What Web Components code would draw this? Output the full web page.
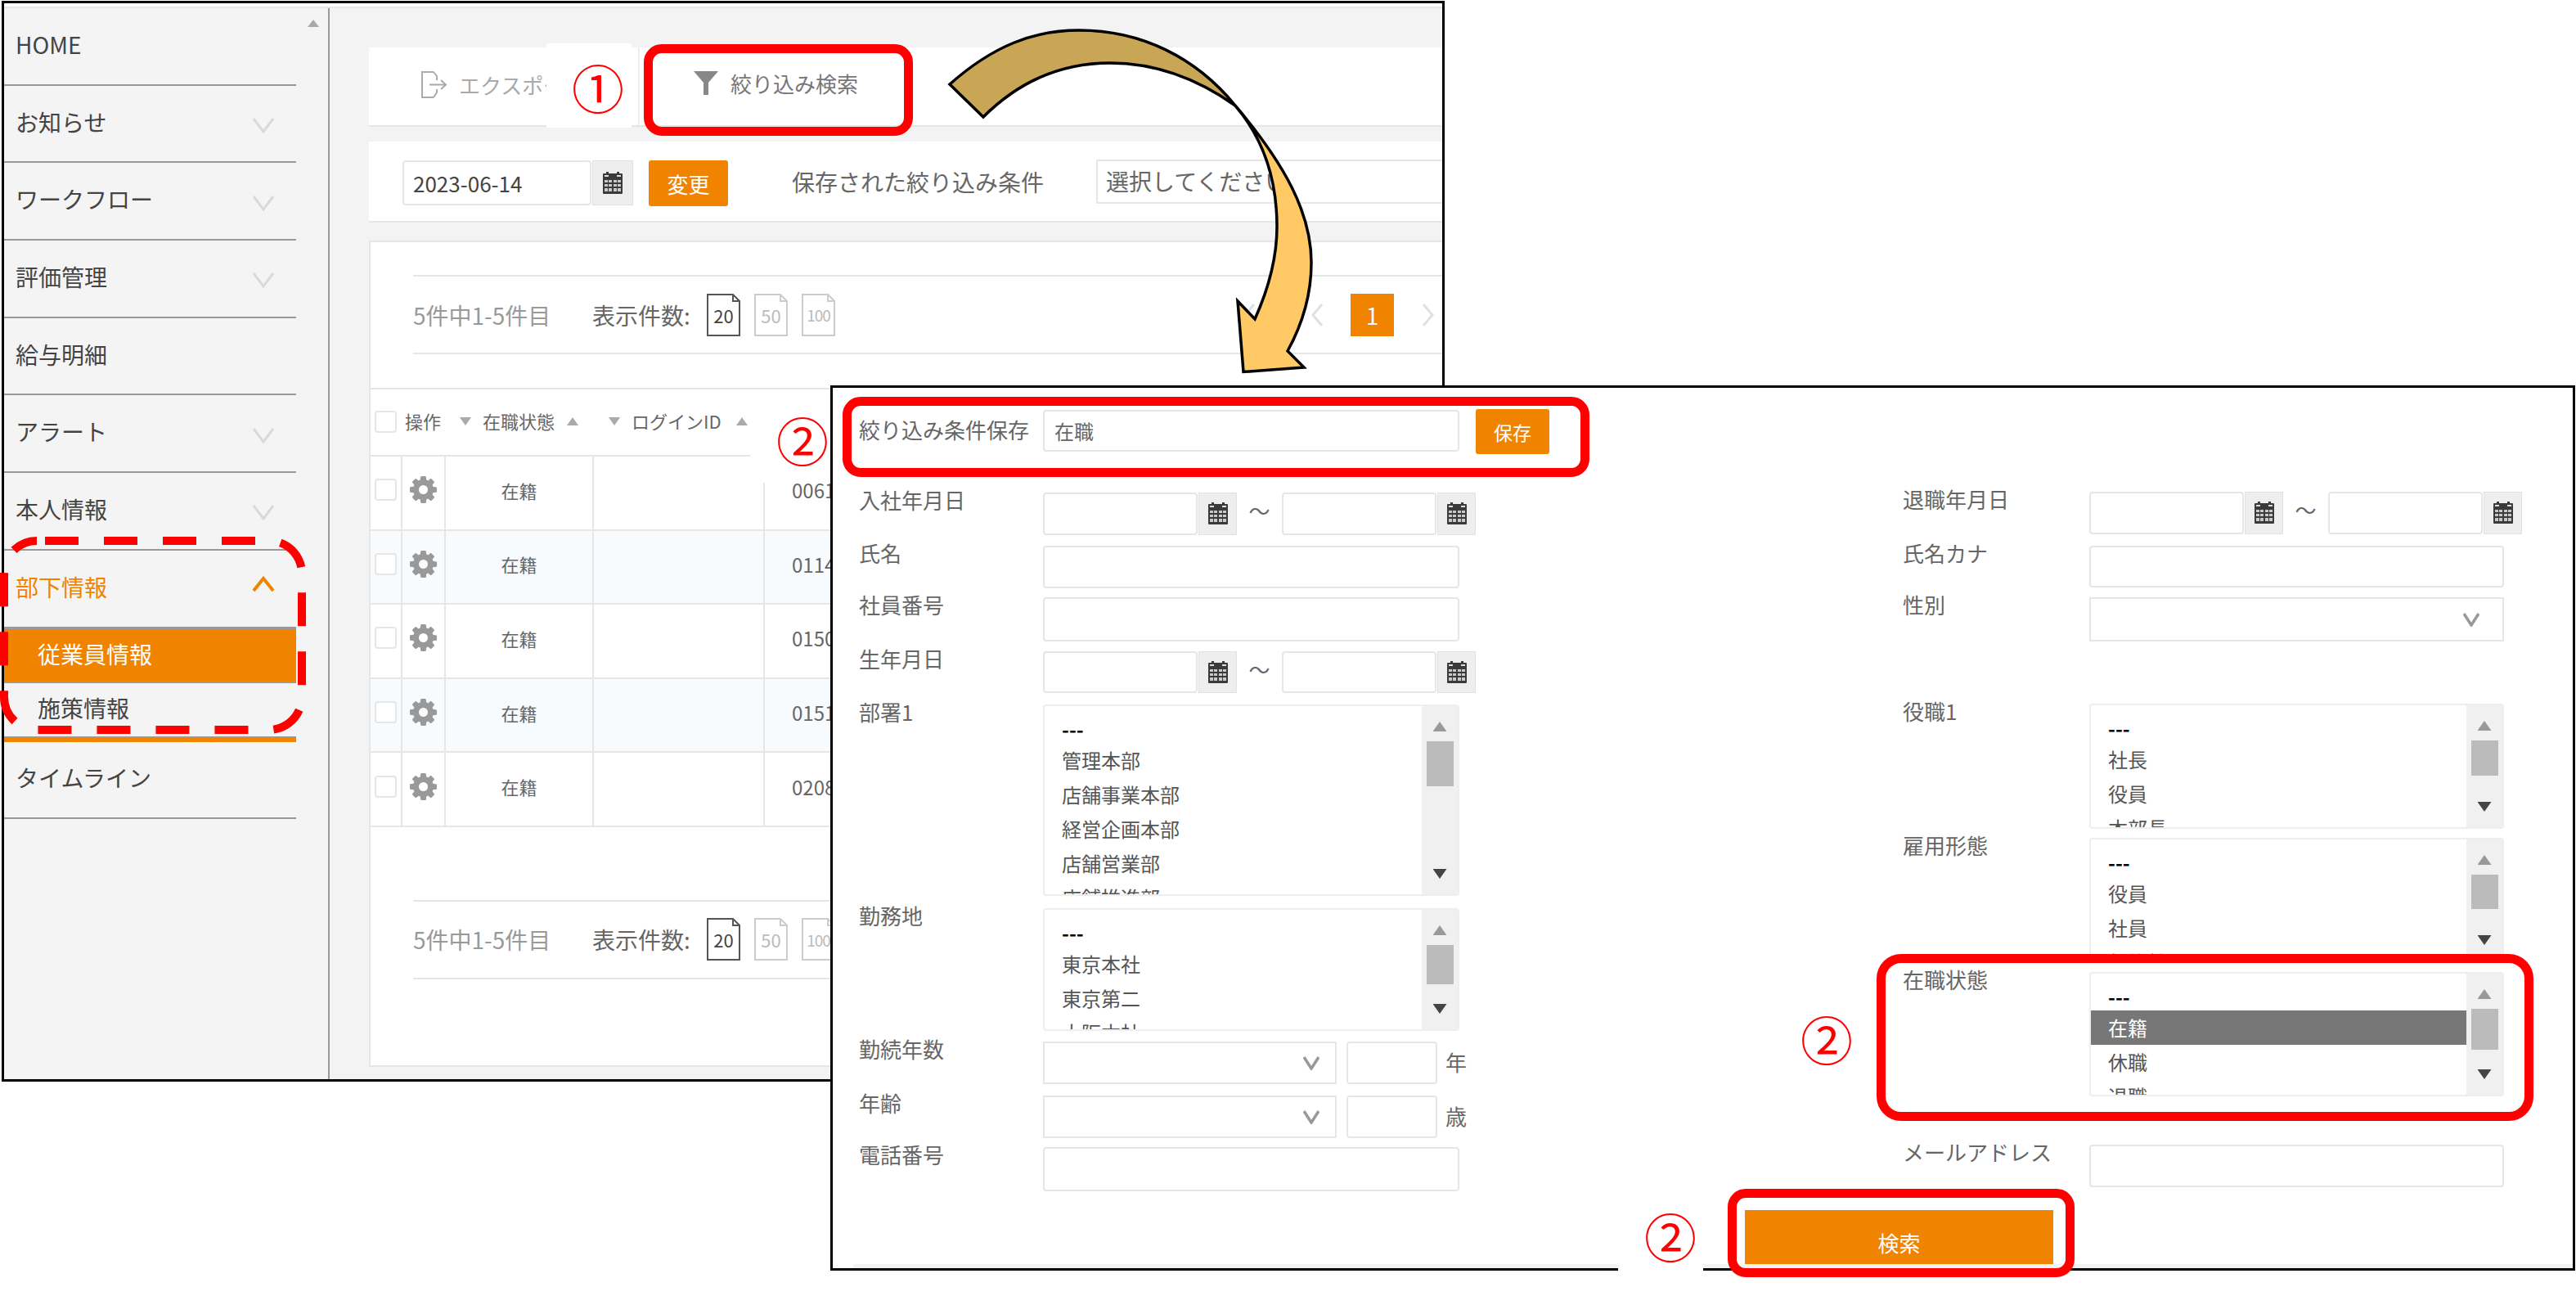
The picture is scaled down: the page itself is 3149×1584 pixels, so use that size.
<!DOCTYPE html>
<html lang="ja">
<head>
<meta charset="utf-8">
<title>絞り込み検索</title>
<style>
  html, body { margin: 0; background: #fff; }
  body {
    position: relative;
    width: 3149px;
    height: 1584px;
    overflow: hidden;
    font-family: "Noto Sans CJK JP", "Noto Sans", sans-serif;
    color: #555;
  }
  .unit { font-size: 26px; line-height: 50px; margin-left: 10px; color: #666; }
</style>
</head>
<body>

<main-window>
  <nav-item slot="nav" chevron="none">HOME</nav-item>
  <nav-item slot="nav" chevron="down">お知らせ</nav-item>
  <nav-item slot="nav" chevron="down">ワークフロー</nav-item>
  <nav-item slot="nav" chevron="down">評価管理</nav-item>
  <nav-item slot="nav" chevron="none">給与明細</nav-item>
  <nav-item slot="nav" chevron="down">アラート</nav-item>
  <nav-item slot="nav" chevron="down">本人情報</nav-item>
  <nav-item slot="nav" chevron="up">部下情報</nav-item>
  <nav-sub slot="nav" active>従業員情報</nav-sub>
  <nav-sub slot="nav" last>施策情報</nav-sub>
  <nav-item slot="nav" chevron="none">タイムライン</nav-item>

  <tab-bar></tab-bar>
  <filter-bar></filter-bar>
  <result-panel>
    <pager-bar></pager-bar>
    <table-head></table-head>
    <table-row code="0061"></table-row>
    <table-row code="0114" alt></table-row>
    <table-row code="0150"></table-row>
    <table-row code="0151" alt></table-row>
    <table-row code="0208"></table-row>
    <pager-bar bottom></pager-bar>
  </result-panel>
</main-window>

<num-badge style="left:668px;top:53px;width:104px;height:103px;padding-left:22px">①</num-badge>
<num-badge style="left:917px;top:490px;width:100px;height:100px;padding:0 0 8px 28px">②</num-badge>

<search-form>
  <form-field slot="left" label="絞り込み条件保存" style="--h:51px;--label-top:15px">
    <text-box value="在職"></text-box>
    <save-button>保存</save-button>
  </form-field>
  <form-field slot="left" label="入社年月日" style="--h:52px;--gap:50px"><date-range></date-range></form-field>
  <form-field slot="left" label="氏名" style="--h:52px;--gap:13px"><text-box></text-box></form-field>
  <form-field slot="left" label="社員番号" style="--h:54px;--gap:11px"><text-box></text-box></form-field>
  <form-field slot="left" label="生年月日" style="--h:51px;--gap:12px"><date-range></date-range></form-field>
  <form-field slot="left" label="部署1" style="--h:234px;--gap:14px">
    <list-box items="---,管理本部,店舗事業本部,経営企画本部,店舗営業部,店舗推進部" style="--thumb:55px"></list-box>
  </form-field>
  <form-field slot="left" label="勤務地" style="--h:150px;--gap:15px">
    <list-box items="---,東京本社,東京第二,大阪本社" style="--thumb:48px"></list-box>
  </form-field>
  <form-field slot="left" label="勤続年数" style="--h:52px;--gap:13px">
    <select-box style="width:359px"></select-box>
    <text-box style="width:111px;margin-left:12px"></text-box>
    <span class="unit">年</span>
  </form-field>
  <form-field slot="left" label="年齢" style="--h:52px;--gap:14px">
    <select-box style="width:359px"></select-box>
    <text-box style="width:111px;margin-left:12px"></text-box>
    <span class="unit">歳</span>
  </form-field>
  <form-field slot="left" label="電話番号" style="--h:54px;--gap:11px"><text-box></text-box></form-field>

  <form-field slot="right" label="退職年月日" style="--h:52px;--label:228px"><date-range></date-range></form-field>
  <form-field slot="right" label="氏名カナ" style="--h:51px;--gap:14px;--label:228px"><text-box style="width:507px"></text-box></form-field>
  <form-field slot="right" label="性別" style="--h:54px;--gap:12px;--label:228px"><select-box style="width:507px;--chev:28px"></select-box></form-field>
  <form-field slot="right" label="役職1" style="--h:153px;--gap:76px;--label:228px">
    <list-box items="---,社長,役員,本部長" style="width:507px;--thumb:43px"></list-box>
  </form-field>
  <form-field slot="right" label="雇用形態" style="--h:152px;--gap:11px;--label:228px">
    <list-box items="---,役員,社員,契約社員" style="width:507px;--thumb:42px"></list-box>
  </form-field>
  <form-field slot="right" label="在職状態" style="--h:152px;--gap:12px;--label:228px">
    <list-box items="---,在籍,休職,退職" selected="在籍" style="width:507px;--thumb:50px"></list-box>
  </form-field>
  <form-field slot="right" label="メールアドレス" style="--h:52px;--gap:59px;--label:228px"><text-box style="width:507px"></text-box></form-field>

  <search-button slot="foot">検索</search-button>
</search-form>

<num-badge style="left:2178px;top:1215px;width:110px;height:110px;padding-bottom:4px">②</num-badge>
<num-badge style="left:1978px;top:1470px;width:104px;height:90px;padding:0 0 12px 24px">②</num-badge>

<red-box style="left:787px;top:54px;width:329px;height:112px"></red-box>
<red-box style="left:1030px;top:485px;width:913px;height:98px"></red-box>
<red-box style="left:2294px;top:1166px;width:803px;height:204px;--r:30px"></red-box>
<red-box style="left:2112px;top:1453px;width:424px;height:108px"></red-box>
<dash-box></dash-box>
<flow-arrow></flow-arrow>

<script>
const makeTemplate = html => {
  const t = document.createElement('template')
  t.innerHTML = html
  return t
}

// base class: clones the template into an open shadow root
class Part extends HTMLElement {
  constructor(template) {
    super()
    this.attachShadow({ mode: 'open' }).appendChild(template.content.cloneNode(true))
  }
  $(sel) { return this.shadowRoot.querySelector(sel) }
}

const calendarSvg = `<svg width="26" height="28" viewBox="0 0 26 28">
  <rect x="1" y="2" width="24" height="25" rx="1" fill="#3a3a3a"/>
  <rect x="5" y="0" width="3" height="4" fill="#3a3a3a"/><rect x="18" y="0" width="3" height="4" fill="#3a3a3a"/>
  <rect x="3" y="4" width="5" height="2" fill="#ddd"/><rect x="18" y="4" width="5" height="2" fill="#ddd"/>
  <g fill="#c8c8c8">
    <rect x="3" y="10" width="4" height="3"/><rect x="8" y="10" width="4" height="3"/><rect x="14" y="10" width="4" height="3"/><rect x="19" y="10" width="4" height="3"/>
    <rect x="3" y="15" width="4" height="3"/><rect x="8" y="15" width="4" height="3"/><rect x="14" y="15" width="4" height="3"/><rect x="19" y="15" width="4" height="3"/>
    <rect x="3" y="20" width="4" height="4"/><rect x="8" y="20" width="4" height="4"/><rect x="14" y="20" width="4" height="4"/><rect x="19" y="20" width="4" height="4"/>
  </g>
</svg>`

const gearSvg = `<svg width="33" height="33" viewBox="128 128 1536 1536" fill="#999"><path d="M1152 896q0-106-75-181t-181-75-181 75-75 181 75 181 181 75 181-75 75-181zm512-109v222q0 12-8 24t-20 13l-185 28q-19 54-39 91 35 50 107 138 10 12 10 25t-9 23q-27 37-99 108t-94 71q-12 0-26-9l-138-108q-44 23-91 38-16 136-29 186-7 28-36 28h-222q-14 0-24.500-8.500t-11.500-21.500l-28-184q-49-16-90-37l-141 107q-10 9-25 9-14 0-25-11-126-114-165-168-7-10-7-23 0-12 8-23 15-21 51-66.500t54-70.500q-27-50-41-99l-183-27q-13-2-21-12.500t-8-23.500v-222q0-12 8-23t19-13l186-28q14-46 39-92-40-57-107-138-10-12-10-24 0-10 9-23 26-36 98.500-107.500t94.500-71.500q13 0 26 10l138 107q44-23 91-38 16-136 29-186 7-28 36-28h222q14 0 24.500 8.500t11.500 21.500l28 184q49 16 90 37l142-107q9-9 24-9 13 0 25 10 129 119 165 170 7 8 7 22 0 12-8 23-15 21-51 66.500t-54 70.500q26 50 41 98l183 28q13 2 21 12.500t8 23.500z"/></svg>`

// ---- main window ----
const mainWindowTpl = makeTemplate(`
<style>
  :host {
    position: absolute; left: 2px; top: 1px; width: 1764px; height: 1321px;
    box-sizing: border-box; border: 3px solid #000; background: #fff;
    display: flex; flex-direction: column; overflow: hidden;
  }
  .strip { height: 4px; flex: none; border-bottom: 2px solid #e6e6e6; }
  .body { flex: 1; display: flex; min-height: 0; }
  .side { width: 398px; flex: none; box-sizing: border-box; background: #f4f4f4; border-right: 2px solid #999; position: relative; }
  .navs { width: 357px; display: flex; flex-direction: column; }
  .up { position: absolute; left: 371px; top: 14px; width: 14px; height: 9px; background: #aaa; clip-path: polygon(50% 0, 100% 100%, 0 100%); }
  .content { flex: 1; min-width: 0; background: #f3f3f3; padding: 48px 0 0 48px; display: flex; flex-direction: column; }
</style>
<div class="strip"></div>
<div class="body">
  <div class="side"><div class="up"></div><div class="navs"><slot name="nav"></slot></div></div>
  <div class="content"><slot></slot></div>
</div>`)
class MainWindow extends Part { constructor() { super(mainWindowTpl) } }

const navItemTpl = makeTemplate(`
<style>
  :host {
    display: flex; align-items: center; justify-content: space-between;
    height: 94.7px; box-sizing: border-box; border-bottom: 2px solid #999;
    padding: 0 26px 2px 14px; font-size: 28px; color: #444; flex: none;
  }
  :host([chevron="up"]) { color: #f08300; }
  span { margin-bottom: 3px; }
  svg { margin-top: 6px; }
  :host([chevron="up"]) svg { margin-top: -8px; }
</style>
<span><slot></slot></span>
<svg width="28" height="20" viewBox="0 0 28 20" fill="none" stroke="#d9d9d9" stroke-width="3"><path d="M2 2 L14 18 L26 2"/></svg>`)
class NavItem extends Part {
  constructor() { super(navItemTpl) }
  connectedCallback() {
    const kind = this.getAttribute('chevron')
    const svg = this.$('svg')
    if (kind === 'none') svg.style.display = 'none'
    if (kind === 'up') {
      svg.querySelector('path').setAttribute('d', 'M2 18 L14 3 L26 18')
      svg.setAttribute('stroke', '#f08300')
      svg.setAttribute('stroke-width', '4')
    }
  }
}

const navSubTpl = makeTemplate(`
<style>
  :host { display: flex; align-items: center; height: 67px; box-sizing: border-box; padding-left: 41px; font-size: 28px; color: #444; flex: none; }
  :host([active]) { background: #f08300; color: #fff; border-top: 2px solid #999; border-bottom: 2px solid #999; height: 68px; margin-top: -1px; padding-bottom: 3px; }
  :host([last]) { height: 72px; border-bottom: 5px solid #f08300; box-shadow: inset 0 -2px 0 #999; padding-bottom: 7px; }
</style>
<slot></slot>`)
class NavSub extends Part { constructor() { super(navSubTpl) } }

// ---- tabs ----
const tabBarTpl = makeTemplate(`
<style>
  :host { display: flex; flex: none; height: 97px; box-sizing: border-box; background: #fff; border-bottom: 2px solid #e6e6e6; font-size: 26px; }
  .tab { display: flex; align-items: center; gap: 14px; padding-left: 64px; height: 90px; padding-bottom: 4px; box-sizing: border-box; }
  .one { width: 331px; color: #aaa; border-right: 2px solid #eee; height: 95px; }
  .two { color: #777; padding-left: 66px; gap: 15px; }
</style>
<div class="tab one">
  <svg width="32" height="33" viewBox="0 0 32 33" fill="none" stroke="#aaa" stroke-width="2"><path d="M15 1 H1 V32 H15"/><path d="M15 1 L19 6 V11 M19 22 V26 L15 32"/><path d="M10 16.500 H29 M24 11 L30 16.500 L24 22"/></svg>
  <span>エクスポート</span>
</div>
<div class="tab two">
  <svg width="30" height="29" viewBox="0 0 30 29" fill="#888"><path d="M0 0 H30 L18 14 V29 H12 V14 Z"/></svg>
  <span>絞り込み検索</span>
</div>`)
class TabBar extends Part { constructor() { super(tabBarTpl) } }

// ---- date + saved conditions bar ----
const filterBarTpl = makeTemplate(`
<style>
  :host {
    display: flex; flex: none; margin-top: 18px; height: 99px; box-sizing: border-box;
    background: #fff; border-bottom: 2px solid #e6e6e6; padding: 23px 0 0 41px; overflow: hidden;
  }
  date-field { height: 55px; --w: 231px; --b: 50px; font-size: 26px; flex: none; }
  .change {
    margin-left: 19px; width: 97px; height: 56px; flex: none; background: #f08300; border-radius: 3px;
    color: #fff; font-size: 26px; display: flex; align-items: center; justify-content: center;
  }
  .label { margin-left: 78px; width: 372px; flex: none; font-size: 28px; line-height: 52px; color: #666; }
  .select {
    width: 500px; height: 54px; flex: none; box-sizing: border-box; border: 2px solid #e6e6e6; padding-left: 10px;
    font-size: 28px; line-height: 48px; color: #666; margin-top: -1px;
  }
</style>
<date-field value="2023-06-14"></date-field>
<div class="change">変更</div>
<div class="label">保存された絞り込み条件</div>
<div class="select">選択してください</div>`)
class FilterBar extends Part { constructor() { super(filterBarTpl) } }

const dateFieldTpl = makeTemplate(`
<style>
  :host { display: flex; height: 100%; color: #444; }
  .in {
    width: var(--w, 189px); box-sizing: border-box; border: 2px solid #e6e6e6; border-radius: 4px; background: #fff;
    padding-left: 11px; display: flex; align-items: center;
  }
  .btn {
    width: var(--b, 47px); margin-left: 1px; box-sizing: border-box; background: #eee; border: 1px solid #e2e2e2;
    display: flex; align-items: center; justify-content: center;
  }
</style>
<div class="in"></div>
<div class="btn">${calendarSvg}</div>`)
class DateField extends Part {
  constructor() { super(dateFieldTpl) }
  connectedCallback() { this.$('.in').textContent = this.getAttribute('value') || '' }
}

// ---- results ----
const resultPanelTpl = makeTemplate(`
<style>
  :host {
    display: flex; flex-direction: column; flex: none; margin-top: 22px; height: 1010px; box-sizing: border-box;
    background: #fff; border: 2px solid #e6e6e6; border-right: 0; padding-top: 40px;
  }
</style>
<slot></slot>`)
class ResultPanel extends Part { constructor() { super(resultPanelTpl) } }

const pagerBarTpl = makeTemplate(`
<style>
  :host {
    display: flex; align-items: center; flex: none; height: 97px; box-sizing: border-box; margin-left: 52px;
    border-top: 2px solid #e6e6e6; border-bottom: 2px solid #e6e6e6; padding-right: 9px;
  }
  :host([bottom]) { margin-top: 89px; }
  .count { width: 219px; flex: none; font-size: 28px; color: #999; }
  .show { width: 140px; flex: none; font-size: 28px; color: #666; }
  .sizes { display: flex; gap: 17px; }
  .paging { margin-left: auto; display: flex; align-items: center; }
  .cur { width: 53px; height: 52px; background: #f08300; color: #fff; font-size: 28px; display: flex; align-items: center; justify-content: center; }
</style>
<span class="count">5件中1-5件目</span>
<span class="show">表示件数:</span>
<div class="sizes">
  <page-size active>20</page-size>
  <page-size>50</page-size>
  <page-size small>100</page-size>
</div>
<div class="paging">
  <svg width="16" height="30" viewBox="0 0 16 30" fill="none" stroke="#e0e0e0" stroke-width="3"><path d="M14 2 L3 15 L14 28"/></svg>
  <svg style="margin-left:67px;margin-right:33px" width="16" height="30" viewBox="0 0 16 30" fill="none" stroke="#e0e0e0" stroke-width="3"><path d="M14 2 L3 15 L14 28"/></svg>
  <div class="cur">1</div>
  <svg style="margin-left:34px" width="16" height="30" viewBox="0 0 16 30" fill="none" stroke="#e0e0e0" stroke-width="3"><path d="M2 2 L13 15 L2 28"/></svg>
</div>`)
class PagerBar extends Part { constructor() { super(pagerBarTpl) } }

const pageSizeTpl = makeTemplate(`
<style>
  :host {
    position: relative; display: flex; align-items: center; justify-content: center; flex: none;
    width: 41px; height: 52px; font-size: 22px; color: #bbb;
  }
  :host([active]) { color: #444; }
  :host([small]) { font-size: 19px; letter-spacing: -1px; }
  svg { position: absolute; left: 0; top: 0; }
  span { position: relative; }
</style>
<svg width="41" height="52" viewBox="0 0 41 52" fill="none" stroke="#ccc" stroke-width="2"><path d="M1 1 H32 L40 9 V51 H1 Z"/><path d="M32 1 V9 H40"/></svg>
<span><slot></slot></span>`)
class PageSize extends Part {
  constructor() { super(pageSizeTpl) }
  connectedCallback() { if (this.hasAttribute('active')) this.$('svg').setAttribute('stroke', '#555') }
}

const tableHeadTpl = makeTemplate(`
<style>
  :host {
    display: flex; align-items: center; flex: none; height: 84px; box-sizing: border-box; margin-top: 41px;
    border-top: 2px solid #e6e6e6; border-bottom: 2px solid #e6e6e6; padding-left: 5px; font-size: 22px; color: #666;
  }
  .check { width: 27px; height: 27px; box-sizing: border-box; border: 2px solid #e6e6e6; border-radius: 4px; flex: none; margin-bottom: 2px; }
  i { width: 14px; height: 10px; flex: none; background: #aaa; margin-bottom: 2px; }
  .dn { clip-path: polygon(0 0, 100% 0, 50% 100%); }
  .up { clip-path: polygon(50% 0, 100% 100%, 0 100%); }
  span { flex: none; margin-bottom: 5px; }
</style>
<div class="check"></div>
<span style="margin-left:10px;width:44px">操作</span>
<i class="dn" style="margin-left:23px"></i>
<span style="margin-left:14px;width:89px">在職状態</span>
<i class="up" style="margin-left:14px"></i>
<i class="dn" style="margin-left:37px"></i>
<span style="margin-left:14px;width:114px">ログインID</span>
<i class="up" style="margin-left:14px"></i>`)
class TableHead extends Part { constructor() { super(tableHeadTpl) } }

const tableRowTpl = makeTemplate(`
<style>
  :host {
    display: grid; grid-template-columns: 39px 53px 181px 209px 1fr; flex: none; height: 90.6px; box-sizing: border-box;
    border-bottom: 2px solid #e6e6e6; font-size: 22px; color: #666;
  }
  :host([alt]) { background: #f8fbfd; }
  div { display: flex; align-items: center; border-right: 2px solid #e6e6e6; box-sizing: border-box; padding-bottom: 7px; }
  div:last-child { border-right: 0; padding-left: 33px; font-size: 24px; }
  .check { width: 27px; height: 27px; box-sizing: border-box; border: 2px solid #e6e6e6; border-radius: 4px; background: #fff; margin-left: 5px; }
  .c { justify-content: center; }
</style>
<div><span class="check"></span></div>
<div class="c">${gearSvg}</div>
<div class="c">在籍</div>
<div></div>
<div class="code"></div>`)
class TableRow extends Part {
  constructor() { super(tableRowTpl) }
  connectedCallback() { this.$('.code').textContent = this.getAttribute('code') }
}

// ---- search form ----
const searchFormTpl = makeTemplate(`
<style>
  :host {
    position: absolute; left: 1015px; top: 471px; width: 2133px; height: 1082px; box-sizing: border-box;
    border: 3px solid #000; background: #fff; display: flex; flex-direction: column;
  }
  .cols { display: flex; padding: 27px 0 0 32px; height: 1005px; box-sizing: border-box; flex: none; }
  .col { display: flex; flex-direction: column; }
  .left { width: 1276px; flex: none; }
  .right { padding-top: 100px; }
  .foot {
    flex: 1; margin-left: 25px; border-bottom: 5px solid #f3f3f3; padding-left: 1090px;
    display: flex; align-items: flex-start;
  }
</style>
<div class="cols">
  <div class="col left"><slot name="left"></slot></div>
  <div class="col right"><slot name="right"></slot></div>
</div>
<div class="foot"><slot name="foot"></slot></div>`)
class SearchForm extends Part { constructor() { super(searchFormTpl) } }

const formFieldTpl = makeTemplate(`
<style>
  :host {
    display: grid; grid-template-columns: var(--label, 225px) 1fr; flex: none;
    height: var(--h, 52px); margin-top: var(--gap, 0);
  }
  .label { font-size: 26px; line-height: 17px; color: #666; padding-top: var(--label-top, 0); white-space: nowrap; }
  .ctl { display: flex; height: var(--h, 52px); }
</style>
<div class="label"></div>
<div class="ctl"><slot></slot></div>`)
class FormField extends Part {
  constructor() { super(formFieldTpl) }
  connectedCallback() { this.$('.label').textContent = this.getAttribute('label') }
}

const textBoxTpl = makeTemplate(`
<style>
  :host {
    display: flex; align-items: center; flex: none; width: 509px; height: 100%; box-sizing: border-box;
    border: 2px solid #e6e6e6; border-radius: 4px; background: #fff; padding-left: 12px; font-size: 24px; color: #666;
  }
</style>
<span></span>`)
class TextBox extends Part {
  constructor() { super(textBoxTpl) }
  connectedCallback() { this.$('span').textContent = this.getAttribute('value') || '' }
}

const selectBoxTpl = makeTemplate(`
<style>
  :host {
    display: flex; align-items: center; justify-content: flex-end; flex: none; height: 100%; box-sizing: border-box;
    border: 2px solid #e6e6e6; background: #fff; padding-right: var(--chev, 19px);
  }
</style>
<svg width="20" height="18" viewBox="0 0 20 18" fill="none" stroke="#999" stroke-width="3.500"><path d="M1 2 L10 16 L19 2"/></svg>`)
class SelectBox extends Part { constructor() { super(selectBoxTpl) } }

const dateRangeTpl = makeTemplate(`
<style>
  :host { display: flex; height: 100%; flex: none; }
  .t { width: 55px; text-align: center; font-size: 26px; line-height: 44px; color: #666; }
</style>
<date-field></date-field>
<span class="t">～</span>
<date-field></date-field>`)
class DateRange extends Part { constructor() { super(dateRangeTpl) } }

const listBoxTpl = makeTemplate(`
<style>
  :host {
    display: flex; flex: none; width: 509px; height: 100%; box-sizing: border-box; overflow: hidden;
    border: 2px solid #eee; border-radius: 4px; background: #fff; font-size: 24px; color: #555;
  }
  .items { flex: 1; min-width: 0; padding-top: 3px; }
  .item { height: 42px; line-height: 42px; padding-left: 21px; }
  .item.dash { box-sizing: border-box; padding-top: 8px; line-height: 34px; color: #000; font-weight: 700; }
  .item.on { background: #777; color: #fff; }
  .bar { width: 44px; flex: none; background: #f0f0f0; box-sizing: border-box; padding: 19px 0; display: flex; flex-direction: column; align-items: center; }
  .bar i { width: 17px; height: 12px; flex: none; }
  .u { background: #999; clip-path: polygon(50% 0, 100% 100%, 0 100%); }
  .d { background: #444; clip-path: polygon(0 0, 100% 0, 50% 100%); margin-top: auto; }
  .thumb { width: 33px; height: var(--thumb, 50px); flex: none; background: #bbb; margin-top: 12px; }
</style>
<div class="items"></div>
<div class="bar"><i class="u"></i><div class="thumb"></div><i class="d"></i></div>`)
class ListBox extends Part {
  constructor() { super(listBoxTpl) }
  connectedCallback() {
    const selected = this.getAttribute('selected')
    const box = this.$('.items')
    this.getAttribute('items').split(',').forEach(name => {
      const el = document.createElement('div')
      el.className = 'item'
      if (name === '---') el.classList.add('dash')
      if (name === selected) el.classList.add('on')
      el.textContent = name
      box.appendChild(el)
    })
  }
}

const saveButtonTpl = makeTemplate(`
<style>
  :host {
    display: flex; align-items: center; justify-content: center; flex: none; width: 90px; height: 55px; margin: -1px 0 0 20px;
    background: #f08300; border-radius: 3px; color: #fff; font-size: 23px;
  }
</style>
<slot></slot>`)
class SaveButton extends Part { constructor() { super(saveButtonTpl) } }

const searchButtonTpl = makeTemplate(`
<style>
  :host {
    display: flex; align-items: flex-end; justify-content: center; flex: none; width: 377px; height: 66px; box-sizing: border-box;
    background: #f08300; color: #fff; font-size: 26px; line-height: 38px; padding-bottom: 7px;
  }
</style>
<slot></slot>`)
class SearchButton extends Part { constructor() { super(searchButtonTpl) } }

// ---- annotations drawn over the screenshot ----
const numBadgeTpl = makeTemplate(`
<style>
  :host {
    position: absolute; display: flex; align-items: center; justify-content: center; background: #fff; box-sizing: border-box;
    color: #f00; font-size: 64px; line-height: 1;
  }
</style>
<slot></slot>`)
class NumBadge extends Part { constructor() { super(numBadgeTpl) } }

const redBoxTpl = makeTemplate(`
<style>
  :host { position: absolute; box-sizing: border-box; border: 11px solid #f00; border-radius: var(--r, 22px); pointer-events: none; }
</style>`)
class RedBox extends Part { constructor() { super(redBoxTpl) } }

const dashBoxTpl = makeTemplate(`
<style>
  :host { position: absolute; left: 0; top: 650px; }
  svg { display: block; }
</style>
<svg width="380" height="254" viewBox="0 650 380 254" fill="none" stroke="#f00" stroke-width="10">
  <rect x="5" y="661" width="364" height="231" rx="40" stroke-dasharray="41 31" stroke-dashoffset="-10"/>
</svg>`)
class DashBox extends Part { constructor() { super(dashBoxTpl) } }

const flowArrowTpl = makeTemplate(`
<style>
  :host { position: absolute; left: 0; top: 0; width: 0; height: 0; }
  svg { position: absolute; left: 1150px; top: 30px; }
</style>
<svg width="470" height="440" viewBox="1150 30 470 440" stroke="#000" stroke-width="3.500" stroke-linejoin="miter">
  <path fill="#ffca66" d="M1510 129 C1570 200 1603 260 1603 321 C1603 365 1590 400 1574 429 L1594 449 L1520 454.500 L1513 368 L1534 390 C1552 350 1561 315 1561 277 C1561 220 1545 170 1510 129 Z"/>
  <path fill="#c9a556" d="M1161 103 C1215 55 1265 37 1319 37 C1395 37 1462 70 1510 129 C1462 95 1410 77 1357 77 C1295 77 1245 100 1202 143 Z"/>
</svg>`)
class FlowArrow extends Part { constructor() { super(flowArrowTpl) } }

customElements.define('date-field', DateField)
customElements.define('page-size', PageSize)
customElements.define('main-window', MainWindow)
customElements.define('nav-item', NavItem)
customElements.define('nav-sub', NavSub)
customElements.define('tab-bar', TabBar)
customElements.define('filter-bar', FilterBar)
customElements.define('result-panel', ResultPanel)
customElements.define('pager-bar', PagerBar)
customElements.define('table-head', TableHead)
customElements.define('table-row', TableRow)
customElements.define('search-form', SearchForm)
customElements.define('form-field', FormField)
customElements.define('text-box', TextBox)
customElements.define('select-box', SelectBox)
customElements.define('date-range', DateRange)
customElements.define('list-box', ListBox)
customElements.define('save-button', SaveButton)
customElements.define('search-button', SearchButton)
customElements.define('num-badge', NumBadge)
customElements.define('red-box', RedBox)
customElements.define('dash-box', DashBox)
customElements.define('flow-arrow', FlowArrow)
</script>
</body>
</html>
